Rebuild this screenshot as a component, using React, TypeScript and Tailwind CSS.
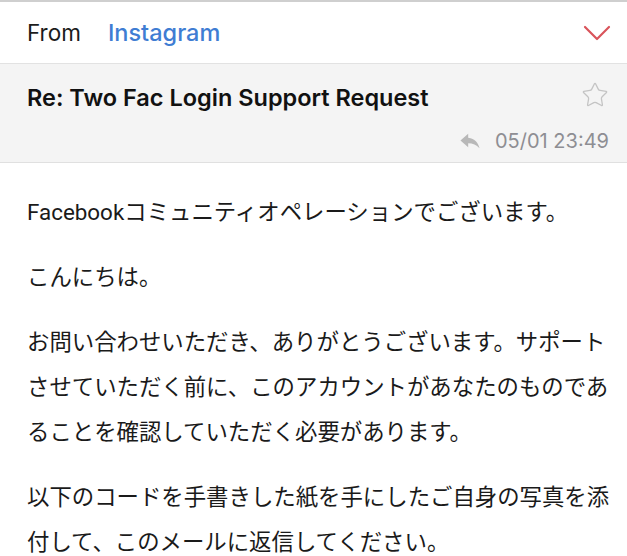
import React from 'react';
import { Star } from 'lucide-react';

const uiFont = { fontFamily: 'Inter, "Noto Sans CJK JP", sans-serif' };
const bodyFont = { fontFamily: 'Roboto, "Noto Sans CJK JP", sans-serif' };

function ReplyIcon() {
  return (
    <svg width="22" height="20" viewBox="0 0 24 22" fill="#b8b8b8">
      <path d="M10 7.5V3L1.5 10.5 10 18v-4.6c5.2 0 9 1.7 12.5 5.6C21 13 17.5 8.4 10 7.5z" />
    </svg>
  );
}

function RedChevron() {
  return (
    <svg width="28" height="16" viewBox="0 0 28 16" fill="none">
      <polyline points="2,2 14,14 26,2" stroke="#d9545b" strokeWidth="2.2" strokeLinecap="round" strokeLinejoin="round" />
    </svg>
  );
}

export default function App() {
  const paragraphs = [
    'Facebookコミュニティオペレーションでございます。',
    'こんにちは。',
    'お問い合わせいただき、ありがとうございます。サポートさせていただく前に、このアカウントがあなたのものであることを確認していただく必要があります。',
    '以下のコードを手書きした紙を手にしたご自身の写真を添付して、このメールに返信してください。',
  ];

  return (
    <div className="w-[627px] h-[556px] overflow-hidden bg-white">
      {/* From row */}
      <div
        className="h-[64px] border-t-2 border-b border-t-[#cfcfcf] border-b-[#e2e2e2] flex items-center pl-[27px] pr-[16px]"
        style={uiFont}
      >
        <span className="text-[22.5px] text-[#1c1c1c]">From</span>
        <span className="text-[23.5px] font-medium text-[#3f7dd3] ml-[27px]">Instagram</span>
        <div className="flex-1" />
        <RedChevron />
      </div>

      {/* Subject block */}
      <div
        className="h-[99px] bg-[#f4f4f4] border-b border-[#e0e0e0] pl-[27px] pr-[18px] pt-[16px] flex flex-col"
        style={uiFont}
      >
        <div className="flex items-center justify-between">
          <span className="text-[23.5px] font-semibold text-[#111]">Re: Two Fac Login Support Request</span>
          <Star size={28} strokeWidth={1.1} color="#c4c4c4" className="-mt-[6px]" />
        </div>
        <div className="flex items-center justify-end gap-[14px] mt-[11px]">
          <ReplyIcon />
          <span className="text-[20px] text-[#8e8e93]">05/01 23:49</span>
        </div>
      </div>

      {/* Body */}
      <div
        className="pl-[27px] pr-[14px] pt-[27px] text-[22.4px] leading-[45px] text-[#1a1a1a]"
        style={bodyFont}
      >
        {paragraphs.map((p, i) => (
          <p key={i} className={i > 0 ? 'mt-[20px]' : ''}>
            {p}
          </p>
        ))}
      </div>
    </div>
  );
}
